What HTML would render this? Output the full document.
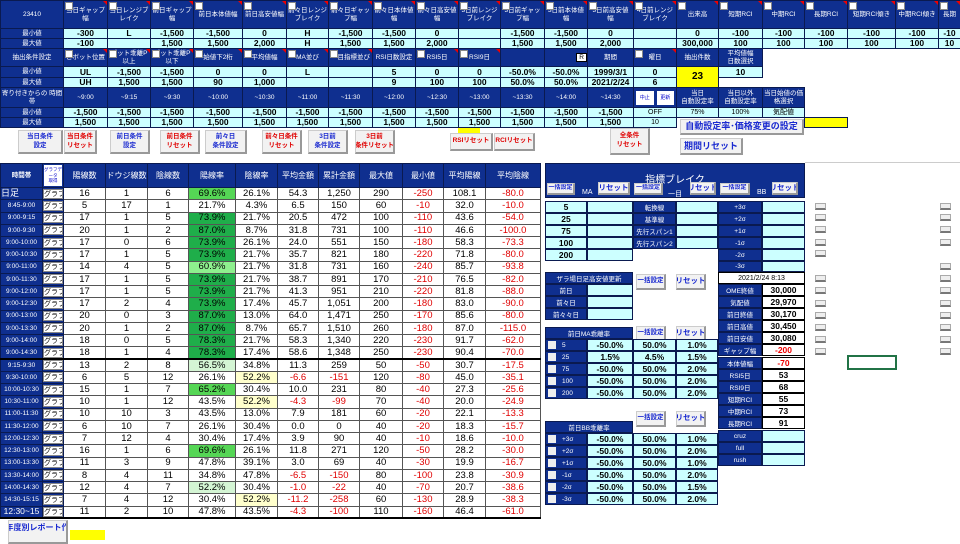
<!DOCTYPE html><html><head><meta charset="utf-8"><style>
*{margin:0;padding:0;box-sizing:border-box}
body{width:960px;height:540px;overflow:hidden;background:#fff;font-family:"Liberation Sans","Noto Sans CJK JP",sans-serif;position:relative}
table{border-collapse:collapse;table-layout:fixed;position:absolute}
td{border:1px solid #0a1a50;text-align:center;overflow:hidden;white-space:nowrap;font-size:8.5px;font-weight:bold;line-height:1}
td.d{background:#0f2f8f;color:#fff;font-weight:normal;font-size:6.5px;white-space:normal;line-height:1.15}
td.c{background:#ccffff;color:#000}
td.w{background:#fff;color:#000}
td.y{background:#ffff00}
td.e{border:none;background:#fff}
.r{color:#e00000}
.cb{position:relative}
.cb:before{content:"";position:absolute;left:1px;top:1px;width:6px;height:6px;background:#fff;border:1px solid #888}
.cb:after{content:"";position:absolute;right:0;top:0;border-left:4px solid transparent;border-top:4px solid #e00}
.a{position:absolute}
.bt{position:absolute;background:#f2f2f2;border:1px solid #ccc;border-right:2px solid #999;border-bottom:2px solid #999;font-size:6.5px;font-weight:bold;text-align:center;line-height:1.35;display:flex;align-items:center;justify-content:center;color:#1a2ad0;white-space:nowrap;overflow:hidden}
.bt.r{color:#e00000}
.dk{position:absolute;background:#0f2f8f;color:#fff;font-size:6.5px;display:flex;align-items:center;justify-content:center;border:1px solid #0a1a50;white-space:nowrap;overflow:hidden}
.cy{position:absolute;background:#ccffff;border:1px solid #0a1a50;font-size:8.5px;font-weight:bold;display:flex;align-items:center;justify-content:center}
.wh{position:absolute;background:#fff;border:1px solid #000;font-size:8.5px;font-weight:bold;display:flex;align-items:center;justify-content:center}
.sb{position:absolute;width:11px;height:7px;background:#eee;border:1px solid #aaa;border-bottom:2px solid #777}
#m td{font-size:9.5px;font-weight:normal;border:1px solid #555;height:12.25px}
#m td.d{font-size:6.5px;border:1px solid #0a1a50;white-space:nowrap}
#m td.g1{background:#1fae4a}#m td.g2{background:#55d655}#m td.g3{background:#8ef08e}#m td.g4{background:#d4f5d4}#m td.py{background:#ffffcc}
.gb{display:block;background:#fff;color:#000;border:1px solid #888;font-size:7px;height:10px;line-height:9px;overflow:hidden}
</style></head><body>

<table style="left:0;top:0;width:960px">
<colgroup><col width=63><col width=44><col width=43><col width=43><col width=49><col width=44><col width=42><col width=44><col width=43><col width=43><col width=42><col width=44><col width=43><col width=46><col width=43><col width=42><col width=44><col width=42><col width=43><col width=48><col width=43><col width=22></colgroup>
<tr style="height:28px"><td class="d">23410</td><td class="d cb">当日ギャップ<br>幅</td><td class="d cb">当日レンジブ<br>レイク</td><td class="d cb">前日ギャップ<br>幅</td><td class="d cb">前日本体値幅</td><td class="d cb">前日高安値幅</td><td class="d cb">前々日レンジ<br>ブレイク</td><td class="d cb">前々日ギャッ<br>プ幅</td><td class="d cb">前々日本体値<br>幅</td><td class="d cb">前々日高安値<br>幅</td><td class="d cb">3日前レンジ<br>ブレイク</td><td class="d cb">3日前ギャッ<br>プ幅</td><td class="d cb">3日前本体値<br>幅</td><td class="d cb">3日前高安値<br>幅</td><td class="d cb">4日前レンジ<br>ブレイク</td><td class="d cb">出来高</td><td class="d cb">短期RCI</td><td class="d cb">中期RCI</td><td class="d cb">長期RCI</td><td class="d cb">短期RCI傾き</td><td class="d cb">中期RCI傾き</td><td class="d cb">長期</td></tr>
<tr style="height:10px"><td class="d">最小値</td><td class="c r">-300</td><td class="c">L</td><td class="c r">-1,500</td><td class="c r">-1,500</td><td class="c">0</td><td class="c">H</td><td class="c r">-1,500</td><td class="c r">-1,500</td><td class="c">0</td><td class="c"></td><td class="c r">-1,500</td><td class="c r">-1,500</td><td class="c">0</td><td class="c"></td><td class="c">0</td><td class="c r">-100</td><td class="c r">-100</td><td class="c r">-100</td><td class="c r">-100</td><td class="c r">-100</td><td class="c r">-10</td></tr>
<tr style="height:10px"><td class="d">最大値</td><td class="c r">-100</td><td class="c"></td><td class="c">1,500</td><td class="c">1,500</td><td class="c">2,000</td><td class="c">H</td><td class="c">1,500</td><td class="c">1,500</td><td class="c">2,000</td><td class="c"></td><td class="c">1,500</td><td class="c">1,500</td><td class="c">2,000</td><td class="c"></td><td class="c">300,000</td><td class="c">100</td><td class="c">100</td><td class="c">100</td><td class="c">100</td><td class="c">100</td><td class="c">10</td></tr>
<tr style="height:18px"><td class="d">抽出条件設定</td><td class="d cb">ピボット位置</td><td class="d cb">ポット乖離P<br>以上</td><td class="d cb">ポット乖離P<br>以下</td><td class="d cb">始値下2桁</td><td class="d cb">平均値幅</td><td class="d cb">MA並び</td><td class="d cb">一目指標並び</td><td class="d">RSI日数設定</td><td class="d cb">RSI5日</td><td class="d cb">RSI9日</td><td class="d"></td><td class="d" style="text-align:right"><span style="background:#fff;color:#000;padding:0 2px;border:1px solid #000">R</span></td><td class="d">期間</td><td class="d cb">曜日</td><td class="d">抽出件数</td><td class="d">平均値幅<br>日数選択</td><td class="e"></td><td class="e"></td><td class="e"></td><td class="e"></td><td class="e"></td></tr>
<tr style="height:11px"><td class="d">最小値</td><td class="c">UL</td><td class="c r">-1,500</td><td class="c r">-1,500</td><td class="c">0</td><td class="c">0</td><td class="c">L</td><td class="c"></td><td class="c">5</td><td class="c">0</td><td class="c">0</td><td class="c">-50.0%</td><td class="c">-50.0%</td><td class="c">1999/3/1</td><td class="c">0</td><td class="y" rowspan=2 style="font-size:10px">23</td><td class="c">10</td><td class="e"></td><td class="e"></td><td class="e"></td><td class="e"></td><td class="e"></td></tr>
<tr style="height:10px"><td class="d">最大値</td><td class="c">UH</td><td class="c">1,500</td><td class="c">1,500</td><td class="c">90</td><td class="c">1,000</td><td class="c"></td><td class="c"></td><td class="c">9</td><td class="c">100</td><td class="c">100</td><td class="c">50.0%</td><td class="c">50.0%</td><td class="c">2021/2/24</td><td class="c">6</td><td class="e"></td><td class="e"></td><td class="e"></td><td class="e"></td><td class="e"></td><td class="e"></td></tr>
<tr style="height:20px"><td class="d">寄り付きからの 時間帯</td><td class="d">~9:00</td><td class="d">~9:15</td><td class="d">~9:30</td><td class="d">~10:00</td><td class="d">~10:30</td><td class="d">~11:00</td><td class="d">~11:30</td><td class="d">~12:00</td><td class="d">~12:30</td><td class="d">~13:00</td><td class="d">~13:30</td><td class="d">~14:00</td><td class="d">~14:30</td><td class="d" style="padding:2px"><div style="display:flex;gap:3px;height:14px"><span style="flex:1;background:#fff;color:#00c;font-size:5px;line-height:14px">中止</span><span style="flex:1;background:#fff;color:#00c;font-size:5px;line-height:14px">更新</span></div></td><td class="d">当日<br>自動設定率</td><td class="d">当日以外<br>自動設定率</td><td class="d">当日始値の価<br>格選択</td><td class="e"></td><td class="e"></td><td class="e"></td><td class="e"></td></tr>
<tr style="height:10px"><td class="d">最小値</td><td class="c r">-1,500</td><td class="c r">-1,500</td><td class="c r">-1,500</td><td class="c r">-1,500</td><td class="c r">-1,500</td><td class="c r">-1,500</td><td class="c r">-1,500</td><td class="c r">-1,500</td><td class="c r">-1,500</td><td class="c r">-1,500</td><td class="c r">-1,500</td><td class="c r">-1,500</td><td class="c r">-1,500</td><td class="c" style="font-weight:normal;font-size:7px">OFF</td><td class="c" style="font-weight:normal;font-size:7px">75%</td><td class="c" style="font-weight:normal;font-size:7px">100%</td><td class="c" style="font-weight:normal;font-size:7px">気配値</td><td class="e"></td><td class="e"></td><td class="e"></td><td class="e"></td></tr>
<tr style="height:10px"><td class="d">最大値</td><td class="c">1,500</td><td class="c">1,500</td><td class="c">1,500</td><td class="c">1,500</td><td class="c">1,500</td><td class="c">1,500</td><td class="c">1,500</td><td class="c">1,500</td><td class="c">1,500</td><td class="c">1,500</td><td class="c">1,500</td><td class="c">1,500</td><td class="c">1,500</td><td class="c" style="font-weight:normal;font-size:7px">10</td><td class="e"></td><td class="e"></td><td class="e"></td><td class="y"></td><td class="e"></td><td class="e"></td><td class="e"></td></tr>
</table>

<div class="bt" style="left:18px;top:130px;width:45px;height:24px">当日条件<br>設定</div>
<div class="bt r" style="left:64px;top:130px;width:33px;height:24px">当日条件<br>リセット</div>
<div class="bt" style="left:110px;top:130px;width:40px;height:24px">前日条件<br>設定</div>
<div class="bt r" style="left:160px;top:130px;width:40px;height:24px">前日条件<br>リセット</div>
<div class="bt" style="left:205px;top:130px;width:42px;height:24px">前々日<br>条件設定</div>
<div class="bt r" style="left:262px;top:130px;width:40px;height:24px">前々日条件<br>リセット</div>
<div class="bt" style="left:308px;top:130px;width:40px;height:24px">3日前<br>条件設定</div>
<div class="bt r" style="left:355px;top:130px;width:40px;height:24px">3日前<br>条件リセット</div>
<div class="a" style="left:458px;top:128px;width:22px;height:5px;background:#ff0"></div>
<div class="bt r" style="left:450px;top:133px;width:43px;height:18px">RSIリセット</div>
<div class="bt r" style="left:494px;top:133px;width:41px;height:18px">RCIリセット</div>
<div class="bt r" style="left:610px;top:128px;width:40px;height:27px">全条件<br>リセット</div>
<div class="bt" style="left:680px;top:119px;width:124px;height:16px;font-size:9px">自動設定率･価格変更の設定</div>
<div class="bt" style="left:680px;top:138px;width:63px;height:17px;font-size:9px">期間リセット</div>
<div class="a" style="left:805px;top:162px;width:155px;height:1px;background:#ccc"></div>

<table id="m" style="left:0;top:163px;width:540px">
<colgroup><col width=42><col width=21><col width=42><col width=42><col width=41><col width=47><col width=42><col width=41><col width=41><col width=43><col width=41><col width=42><col width=55></colgroup>
<tr style="height:24px"><td class="d" style="font-weight:bold">時間帯</td><td class="d" style="padding:1px"><span style="display:block;background:#fff;color:#00c;font-size:4.5px;line-height:1.2;padding:2px 0;white-space:normal">グラフデータ<br>取得</span></td><td class="d" style="font-size:8px">陽線数</td><td class="d" style="font-size:8px">ドウジ線数</td><td class="d" style="font-size:8px">陰線数</td><td class="d" style="font-size:8px">陽線率</td><td class="d" style="font-size:8px">陰線率</td><td class="d" style="font-size:8px">平均金額</td><td class="d" style="font-size:8px">累計金額</td><td class="d" style="font-size:8px">最大値</td><td class="d" style="font-size:8px">最小値</td><td class="d" style="font-size:8px">平均陽線</td><td class="d" style="font-size:8px">平均陰線</td></tr>
<tr><td class="d" style="font-size:9px;text-align:left">日足</td><td class="d"><span class="gb">グラフ</span></td><td>16</td><td>1</td><td>6</td><td class="g2">69.6%</td><td>26.1%</td><td>54.3</td><td>1,250</td><td>290</td><td class="r">-250</td><td>108.1</td><td class="r">-80.0</td></tr>
<tr><td class="d">8:45-9:00</td><td class="d"><span class="gb">グラフ</span></td><td>5</td><td>17</td><td>1</td><td>21.7%</td><td>4.3%</td><td>6.5</td><td>150</td><td>60</td><td class="r">-10</td><td>32.0</td><td class="r">-10.0</td></tr>
<tr><td class="d">9:00-9:15</td><td class="d"><span class="gb">グラフ</span></td><td>17</td><td>1</td><td>5</td><td class="g1">73.9%</td><td>21.7%</td><td>20.5</td><td>472</td><td>100</td><td class="r">-110</td><td>43.6</td><td class="r">-54.0</td></tr>
<tr><td class="d">9:00-9:30</td><td class="d"><span class="gb">グラフ</span></td><td>20</td><td>1</td><td>2</td><td class="g1">87.0%</td><td>8.7%</td><td>31.8</td><td>731</td><td>100</td><td class="r">-110</td><td>46.6</td><td class="r">-100.0</td></tr>
<tr><td class="d">9:00-10:00</td><td class="d"><span class="gb">グラフ</span></td><td>17</td><td>0</td><td>6</td><td class="g1">73.9%</td><td>26.1%</td><td>24.0</td><td>551</td><td>150</td><td class="r">-180</td><td>58.3</td><td class="r">-73.3</td></tr>
<tr><td class="d">9:00-10:30</td><td class="d"><span class="gb">グラフ</span></td><td>17</td><td>1</td><td>5</td><td class="g1">73.9%</td><td>21.7%</td><td>35.7</td><td>821</td><td>180</td><td class="r">-220</td><td>71.8</td><td class="r">-80.0</td></tr>
<tr><td class="d">9:00-11:00</td><td class="d"><span class="gb">グラフ</span></td><td>14</td><td>4</td><td>5</td><td class="g3">60.9%</td><td>21.7%</td><td>31.8</td><td>731</td><td>160</td><td class="r">-240</td><td>85.7</td><td class="r">-93.8</td></tr>
<tr><td class="d">9:00-11:30</td><td class="d"><span class="gb">グラフ</span></td><td>17</td><td>1</td><td>5</td><td class="g1">73.9%</td><td>21.7%</td><td>38.7</td><td>891</td><td>170</td><td class="r">-210</td><td>76.5</td><td class="r">-82.0</td></tr>
<tr><td class="d">9:00-12:00</td><td class="d"><span class="gb">グラフ</span></td><td>17</td><td>1</td><td>5</td><td class="g1">73.9%</td><td>21.7%</td><td>41.3</td><td>951</td><td>210</td><td class="r">-220</td><td>81.8</td><td class="r">-88.0</td></tr>
<tr><td class="d">9:00-12:30</td><td class="d"><span class="gb">グラフ</span></td><td>17</td><td>2</td><td>4</td><td class="g1">73.9%</td><td>17.4%</td><td>45.7</td><td>1,051</td><td>200</td><td class="r">-180</td><td>83.0</td><td class="r">-90.0</td></tr>
<tr><td class="d">9:00-13:00</td><td class="d"><span class="gb">グラフ</span></td><td>20</td><td>0</td><td>3</td><td class="g1">87.0%</td><td>13.0%</td><td>64.0</td><td>1,471</td><td>250</td><td class="r">-170</td><td>85.6</td><td class="r">-80.0</td></tr>
<tr><td class="d">9:00-13:30</td><td class="d"><span class="gb">グラフ</span></td><td>20</td><td>1</td><td>2</td><td class="g1">87.0%</td><td>8.7%</td><td>65.7</td><td>1,510</td><td>260</td><td class="r">-180</td><td>87.0</td><td class="r">-115.0</td></tr>
<tr><td class="d">9:00-14:00</td><td class="d"><span class="gb">グラフ</span></td><td>18</td><td>0</td><td>5</td><td class="g1">78.3%</td><td>21.7%</td><td>58.3</td><td>1,340</td><td>220</td><td class="r">-230</td><td>91.7</td><td class="r">-62.0</td></tr>
<tr style="border-bottom:2px solid #000"><td class="d">9:00-14:30</td><td class="d"><span class="gb">グラフ</span></td><td>18</td><td>1</td><td>4</td><td class="g1">78.3%</td><td>17.4%</td><td>58.6</td><td>1,348</td><td>250</td><td class="r">-230</td><td>90.4</td><td class="r">-70.0</td></tr>
<tr><td class="d">9:15-9:30</td><td class="d"><span class="gb">グラフ</span></td><td>13</td><td>2</td><td>8</td><td class="g4">56.5%</td><td>34.8%</td><td>11.3</td><td>259</td><td>50</td><td class="r">-50</td><td>30.7</td><td class="r">-17.5</td></tr>
<tr><td class="d">9:30-10:00</td><td class="d"><span class="gb">グラフ</span></td><td>6</td><td>5</td><td>12</td><td>26.1%</td><td class="py">52.2%</td><td class="r">-6.6</td><td class="r">-151</td><td>120</td><td class="r">-80</td><td>45.0</td><td class="r">-35.1</td></tr>
<tr><td class="d">10:00-10:30</td><td class="d"><span class="gb">グラフ</span></td><td>15</td><td>1</td><td>7</td><td class="g2">65.2%</td><td>30.4%</td><td>10.0</td><td>231</td><td>80</td><td class="r">-40</td><td>27.3</td><td class="r">-25.6</td></tr>
<tr><td class="d">10:30-11:00</td><td class="d"><span class="gb">グラフ</span></td><td>10</td><td>1</td><td>12</td><td>43.5%</td><td class="py">52.2%</td><td class="r">-4.3</td><td class="r">-99</td><td>70</td><td class="r">-40</td><td>20.0</td><td class="r">-24.9</td></tr>
<tr><td class="d">11:00-11:30</td><td class="d"><span class="gb">グラフ</span></td><td>10</td><td>10</td><td>3</td><td>43.5%</td><td>13.0%</td><td>7.9</td><td>181</td><td>60</td><td class="r">-20</td><td>22.1</td><td class="r">-13.3</td></tr>
<tr><td class="d">11:30-12:00</td><td class="d"><span class="gb">グラフ</span></td><td>6</td><td>10</td><td>7</td><td>26.1%</td><td>30.4%</td><td>0.0</td><td>0</td><td>40</td><td class="r">-20</td><td>18.3</td><td class="r">-15.7</td></tr>
<tr><td class="d">12:00-12:30</td><td class="d"><span class="gb">グラフ</span></td><td>7</td><td>12</td><td>4</td><td>30.4%</td><td>17.4%</td><td>3.9</td><td>90</td><td>40</td><td class="r">-10</td><td>18.6</td><td class="r">-10.0</td></tr>
<tr><td class="d">12:30-13:00</td><td class="d"><span class="gb">グラフ</span></td><td>16</td><td>1</td><td>6</td><td class="g2">69.6%</td><td>26.1%</td><td>11.8</td><td>271</td><td>120</td><td class="r">-50</td><td>28.2</td><td class="r">-30.0</td></tr>
<tr><td class="d">13:00-13:30</td><td class="d"><span class="gb">グラフ</span></td><td>11</td><td>3</td><td>9</td><td>47.8%</td><td>39.1%</td><td>3.0</td><td>69</td><td>40</td><td class="r">-30</td><td>19.9</td><td class="r">-16.7</td></tr>
<tr><td class="d">13:30-14:00</td><td class="d"><span class="gb">グラフ</span></td><td>8</td><td>4</td><td>11</td><td>34.8%</td><td>47.8%</td><td class="r">-6.5</td><td class="r">-150</td><td>80</td><td class="r">-100</td><td>23.8</td><td class="r">-30.9</td></tr>
<tr><td class="d">14:00-14:30</td><td class="d"><span class="gb">グラフ</span></td><td>12</td><td>4</td><td>7</td><td class="g4">52.2%</td><td>30.4%</td><td class="r">-1.0</td><td class="r">-22</td><td>40</td><td class="r">-70</td><td>20.7</td><td class="r">-38.6</td></tr>
<tr><td class="d">14:30-15:15</td><td class="d"><span class="gb">グラフ</span></td><td>7</td><td>4</td><td>12</td><td>30.4%</td><td class="py">52.2%</td><td class="r">-11.2</td><td class="r">-258</td><td>60</td><td class="r">-130</td><td>28.9</td><td class="r">-38.3</td></tr>
<tr style="border-bottom:2px solid #000"><td class="d" style="font-size:8.5px">12:30~15</td><td class="d"><span class="gb">グラフ</span></td><td>11</td><td>2</td><td>10</td><td>47.8%</td><td>43.5%</td><td class="r">-4.3</td><td class="r">-100</td><td>110</td><td class="r">-160</td><td>46.4</td><td class="r">-61.0</td></tr>
</table>
<div class="bt" style="left:8px;top:520px;width:60px;height:24px;align-items:flex-start;padding-top:2px;font-size:8px">年度別レポート作</div>
<div class="a" style="left:70px;top:530px;width:35px;height:10px;background:#ff0"></div>

<!-- right block -->
<div class="dk" style="left:545px;top:163px;width:260px;height:35px;align-items:flex-start;padding-top:7px;font-size:10px">指標ブレイク</div>
<div class="bt" style="left:547px;top:183px;width:28px;height:12px;font-size:6px">一括設定</div>
<div class="a" style="left:582px;top:189px;color:#fff;font-size:7px">MA</div>
<div class="bt" style="left:598px;top:182px;width:32px;height:13px;font-size:7.5px">リセット</div>
<div class="bt" style="left:634px;top:183px;width:29px;height:12px;font-size:6px">一括設定</div>
<div class="a" style="left:668px;top:189px;color:#fff;font-size:7px">一目</div>
<div class="bt" style="left:690px;top:182px;width:26px;height:13px;font-size:7.5px">リセット</div>
<div class="bt" style="left:720px;top:183px;width:30px;height:12px;font-size:6px">一括設定</div>
<div class="a" style="left:757px;top:189px;color:#fff;font-size:7px">BB</div>
<div class="bt" style="left:772px;top:182px;width:26px;height:13px;font-size:7.5px">リセット</div>

<div class="cy" style="left:545px;top:201px;width:42px;height:12px">5</div><div class="cy" style="left:587px;top:201px;width:46px;height:12px"></div>
<div class="cy" style="left:545px;top:213px;width:42px;height:12px">25</div><div class="cy" style="left:587px;top:213px;width:46px;height:12px"></div>
<div class="cy" style="left:545px;top:225px;width:42px;height:12px">75</div><div class="cy" style="left:587px;top:225px;width:46px;height:12px"></div>
<div class="cy" style="left:545px;top:237px;width:42px;height:12px">100</div><div class="cy" style="left:587px;top:237px;width:46px;height:12px"></div>
<div class="cy" style="left:545px;top:249px;width:42px;height:12px">200</div><div class="cy" style="left:587px;top:249px;width:46px;height:12px"></div>

<div class="dk" style="left:633px;top:201px;width:43px;height:12px">転換線</div><div class="cy" style="left:676px;top:201px;width:42px;height:12px"></div>
<div class="dk" style="left:633px;top:213px;width:43px;height:12px">基準線</div><div class="cy" style="left:676px;top:213px;width:42px;height:12px"></div>
<div class="dk" style="left:633px;top:225px;width:43px;height:12px">先行スパン1</div><div class="cy" style="left:676px;top:225px;width:42px;height:12px"></div>
<div class="dk" style="left:633px;top:237px;width:43px;height:12px">先行スパン2</div><div class="cy" style="left:676px;top:237px;width:42px;height:12px"></div>

<div class="dk" style="left:718px;top:201px;width:44px;height:12px">+3σ</div><div class="cy" style="left:762px;top:201px;width:43px;height:12px"></div>
<div class="dk" style="left:718px;top:213px;width:44px;height:12px">+2σ</div><div class="cy" style="left:762px;top:213px;width:43px;height:12px"></div>
<div class="dk" style="left:718px;top:225px;width:44px;height:12px">+1σ</div><div class="cy" style="left:762px;top:225px;width:43px;height:12px"></div>
<div class="dk" style="left:718px;top:237px;width:44px;height:12px">-1σ</div><div class="cy" style="left:762px;top:237px;width:43px;height:12px"></div>
<div class="dk" style="left:718px;top:249px;width:44px;height:12px">-2σ</div><div class="cy" style="left:762px;top:249px;width:43px;height:12px"></div>
<div class="dk" style="left:718px;top:261px;width:44px;height:11px">-3σ</div><div class="cy" style="left:762px;top:261px;width:43px;height:11px"></div>
<div class="wh" style="left:718px;top:272px;width:87px;height:12px;font-weight:normal;font-size:7px">2021/2/24 8:13</div>

<div class="dk" style="left:718px;top:284px;width:44px;height:12.2px">OME終値</div><div class="wh" style="left:762px;top:284px;width:43px;height:12.2px">30,000</div>
<div class="dk" style="left:718px;top:296px;width:44px;height:12.2px">気配値</div><div class="wh" style="left:762px;top:296px;width:43px;height:12.2px">29,970</div>
<div class="dk" style="left:718px;top:308px;width:44px;height:12.2px">前日終値</div><div class="wh" style="left:762px;top:308px;width:43px;height:12.2px">30,170</div>
<div class="dk" style="left:718px;top:320px;width:44px;height:12.2px">前日高値</div><div class="wh" style="left:762px;top:320px;width:43px;height:12.2px">30,450</div>
<div class="dk" style="left:718px;top:332px;width:44px;height:12.2px">前日安値</div><div class="wh" style="left:762px;top:332px;width:43px;height:12.2px">30,080</div>
<div class="dk" style="left:718px;top:344px;width:44px;height:12.2px">ギャップ幅</div><div class="wh" style="left:762px;top:344px;width:43px;height:12.2px;color:#e00">-200</div>
<div class="dk" style="left:718px;top:357px;width:44px;height:12.2px">本体値幅</div><div class="wh" style="left:762px;top:357px;width:43px;height:12.2px;color:#e00">-70</div>
<div class="dk" style="left:718px;top:369px;width:44px;height:12.2px">RSI5日</div><div class="wh" style="left:762px;top:369px;width:43px;height:12.2px">53</div>
<div class="dk" style="left:718px;top:381px;width:44px;height:12.2px">RSI9日</div><div class="wh" style="left:762px;top:381px;width:43px;height:12.2px">68</div>
<div class="dk" style="left:718px;top:393px;width:44px;height:12.2px">短期RCI</div><div class="wh" style="left:762px;top:393px;width:43px;height:12.2px">55</div>
<div class="dk" style="left:718px;top:405px;width:44px;height:12.2px">中期RCI</div><div class="wh" style="left:762px;top:405px;width:43px;height:12.2px">73</div>
<div class="dk" style="left:718px;top:417px;width:44px;height:12.2px">長期RCI</div><div class="wh" style="left:762px;top:417px;width:43px;height:12.2px">91</div>
<div class="dk" style="left:718px;top:430px;width:44px;height:12.2px">cruz</div><div class="cy" style="left:762px;top:430px;width:43px;height:12.2px"></div>
<div class="dk" style="left:718px;top:442px;width:44px;height:12.2px">full</div><div class="cy" style="left:762px;top:442px;width:43px;height:12.2px"></div>
<div class="dk" style="left:718px;top:454px;width:44px;height:12.2px">rush</div><div class="cy" style="left:762px;top:454px;width:43px;height:12.2px"></div>

<div class="dk" style="left:545px;top:272px;width:88px;height:12px">ザラ場日足高安値更新</div>
<div class="dk" style="left:545px;top:284px;width:42px;height:12px">前日</div><div class="cy" style="left:587px;top:284px;width:46px;height:12px"></div>
<div class="dk" style="left:545px;top:296px;width:42px;height:12px">前々日</div><div class="cy" style="left:587px;top:296px;width:46px;height:12px"></div>
<div class="dk" style="left:545px;top:308px;width:42px;height:12px">前々々日</div><div class="cy" style="left:587px;top:308px;width:46px;height:12px"></div>
<div class="bt" style="left:636px;top:274px;width:30px;height:16px;font-size:6.5px">一括設定</div>
<div class="bt" style="left:676px;top:274px;width:30px;height:16px;font-size:7.5px">リセット</div>

<div class="dk" style="left:545px;top:327px;width:88px;height:12px">前日MA乖離率</div>
<div class="bt" style="left:636px;top:326px;width:30px;height:16px;font-size:6.5px">一括設定</div>
<div class="bt" style="left:676px;top:326px;width:30px;height:16px;font-size:7.5px">リセット</div>
<div class="dk" style="left:545px;top:339px;width:42px;height:12.2px;justify-content:flex-start;padding-left:2px"><i style="width:8px;height:8px;background:#eee;margin-right:6px"></i>5</div><div class="cy" style="left:587px;top:339px;width:46px;height:12.2px">-50.0%</div><div class="cy" style="left:633px;top:339px;width:43px;height:12.2px">50.0%</div><div class="cy" style="left:676px;top:339px;width:42px;height:12.2px">1.0%</div>
<div class="dk" style="left:545px;top:351px;width:42px;height:12.2px;justify-content:flex-start;padding-left:2px"><i style="width:8px;height:8px;background:#eee;margin-right:6px"></i>25</div><div class="cy" style="left:587px;top:351px;width:46px;height:12.2px">1.5%</div><div class="cy" style="left:633px;top:351px;width:43px;height:12.2px">4.5%</div><div class="cy" style="left:676px;top:351px;width:42px;height:12.2px">1.5%</div>
<div class="dk" style="left:545px;top:363px;width:42px;height:12.2px;justify-content:flex-start;padding-left:2px"><i style="width:8px;height:8px;background:#eee;margin-right:6px"></i>75</div><div class="cy" style="left:587px;top:363px;width:46px;height:12.2px">-50.0%</div><div class="cy" style="left:633px;top:363px;width:43px;height:12.2px">50.0%</div><div class="cy" style="left:676px;top:363px;width:42px;height:12.2px">2.0%</div>
<div class="dk" style="left:545px;top:375px;width:42px;height:12.2px;justify-content:flex-start;padding-left:2px"><i style="width:8px;height:8px;background:#eee;margin-right:6px"></i>100</div><div class="cy" style="left:587px;top:375px;width:46px;height:12.2px">-50.0%</div><div class="cy" style="left:633px;top:375px;width:43px;height:12.2px">50.0%</div><div class="cy" style="left:676px;top:375px;width:42px;height:12.2px">2.0%</div>
<div class="dk" style="left:545px;top:387px;width:42px;height:12.2px;justify-content:flex-start;padding-left:2px"><i style="width:8px;height:8px;background:#eee;margin-right:6px"></i>200</div><div class="cy" style="left:587px;top:387px;width:46px;height:12.2px">-50.0%</div><div class="cy" style="left:633px;top:387px;width:43px;height:12.2px">50.0%</div><div class="cy" style="left:676px;top:387px;width:42px;height:12.2px">2.0%</div>

<div class="dk" style="left:545px;top:421px;width:88px;height:12px">前日BB乖離率</div>
<div class="bt" style="left:636px;top:411px;width:30px;height:16px;font-size:6.5px">一括設定</div>
<div class="bt" style="left:676px;top:411px;width:30px;height:16px;font-size:7.5px">リセット</div>
<div class="dk" style="left:545px;top:433px;width:42px;height:12px;justify-content:flex-start;padding-left:2px"><i style="width:8px;height:8px;background:#eee;margin-right:6px"></i>+3σ</div><div class="cy" style="left:587px;top:433px;width:46px;height:12px">-50.0%</div><div class="cy" style="left:633px;top:433px;width:43px;height:12px">50.0%</div><div class="cy" style="left:676px;top:433px;width:42px;height:12px">1.0%</div>
<div class="dk" style="left:545px;top:445px;width:42px;height:12px;justify-content:flex-start;padding-left:2px"><i style="width:8px;height:8px;background:#eee;margin-right:6px"></i>+2σ</div><div class="cy" style="left:587px;top:445px;width:46px;height:12px">-50.0%</div><div class="cy" style="left:633px;top:445px;width:43px;height:12px">50.0%</div><div class="cy" style="left:676px;top:445px;width:42px;height:12px">2.0%</div>
<div class="dk" style="left:545px;top:457px;width:42px;height:12px;justify-content:flex-start;padding-left:2px"><i style="width:8px;height:8px;background:#eee;margin-right:6px"></i>+1σ</div><div class="cy" style="left:587px;top:457px;width:46px;height:12px">-50.0%</div><div class="cy" style="left:633px;top:457px;width:43px;height:12px">50.0%</div><div class="cy" style="left:676px;top:457px;width:42px;height:12px">1.0%</div>
<div class="dk" style="left:545px;top:469px;width:42px;height:12px;justify-content:flex-start;padding-left:2px"><i style="width:8px;height:8px;background:#eee;margin-right:6px"></i>-1σ</div><div class="cy" style="left:587px;top:469px;width:46px;height:12px">-50.0%</div><div class="cy" style="left:633px;top:469px;width:43px;height:12px">50.0%</div><div class="cy" style="left:676px;top:469px;width:42px;height:12px">2.0%</div>
<div class="dk" style="left:545px;top:481px;width:42px;height:12px;justify-content:flex-start;padding-left:2px"><i style="width:8px;height:8px;background:#eee;margin-right:6px"></i>-2σ</div><div class="cy" style="left:587px;top:481px;width:46px;height:12px">-50.0%</div><div class="cy" style="left:633px;top:481px;width:43px;height:12px">50.0%</div><div class="cy" style="left:676px;top:481px;width:42px;height:12px">1.5%</div>
<div class="dk" style="left:545px;top:493px;width:42px;height:12px;justify-content:flex-start;padding-left:2px"><i style="width:8px;height:8px;background:#eee;margin-right:6px"></i>-3σ</div><div class="cy" style="left:587px;top:493px;width:46px;height:12px">-50.0%</div><div class="cy" style="left:633px;top:493px;width:43px;height:12px">50.0%</div><div class="cy" style="left:676px;top:493px;width:42px;height:12px">2.0%</div>

<div class="sb" style="left:815px;top:203px"></div><div class="sb" style="left:815px;top:214px"></div><div class="sb" style="left:815px;top:226px"></div><div class="sb" style="left:815px;top:239px"></div><div class="sb" style="left:815px;top:250px"></div>
<div class="sb" style="left:815px;top:275px"></div><div class="sb" style="left:815px;top:287px"></div><div class="sb" style="left:815px;top:300px"></div><div class="sb" style="left:815px;top:312px"></div><div class="sb" style="left:815px;top:324px"></div><div class="sb" style="left:815px;top:336px"></div><div class="sb" style="left:815px;top:348px"></div>
<div class="sb" style="left:940px;top:203px"></div><div class="sb" style="left:940px;top:214px"></div><div class="sb" style="left:940px;top:226px"></div><div class="sb" style="left:940px;top:239px"></div>
<div class="sb" style="left:940px;top:263px"></div><div class="sb" style="left:940px;top:275px"></div><div class="sb" style="left:940px;top:287px"></div><div class="sb" style="left:940px;top:300px"></div><div class="sb" style="left:940px;top:312px"></div><div class="sb" style="left:940px;top:324px"></div><div class="sb" style="left:940px;top:336px"></div><div class="sb" style="left:940px;top:348px"></div>
<div class="a" style="left:847px;top:355px;width:50px;height:15px;border:2px solid #217346"></div>
</body></html>
